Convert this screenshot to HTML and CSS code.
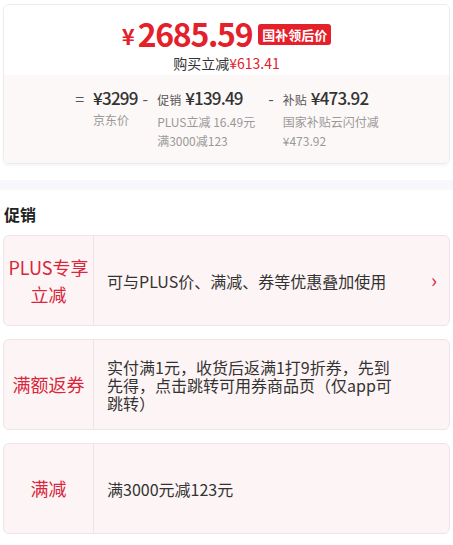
FILE: index.html
```html
<!DOCTYPE html>
<html lang="zh-CN">
<head>
    <meta charset="UTF-8">
    <meta name="viewport" content="width=device-width, initial-scale=1.0">
    <title>促销详情</title>
    <link rel="stylesheet" href="styles.css">
</head>
<body>

    <div class="price-card">
        <div class="price-top">
            <div class="price-main">
                <span class="yen">¥</span><span class="amount">2685.59</span>
                <span class="badge">国补领后价</span>
            </div>
            <div class="price-save">购买立减<span class="red">¥613.41</span></div>
        </div>
        <div class="price-calc">
            <div class="calc-col">
                <span class="op">=</span>
                <div class="calc-body">
                    <div class="calc-head"><span class="num">¥3299</span></div>
                    <div class="calc-note">京东价</div>
                </div>
            </div>
            <div class="calc-col">
                <span class="op">-</span>
                <div class="calc-body">
                    <div class="calc-head"><span class="tag">促销</span><span class="num">¥139.49</span></div>
                    <div class="calc-note">PLUS立减 16.49元</div>
                    <div class="calc-note">满3000减123</div>
                </div>
            </div>
            <div class="calc-col wide">
                <span class="op">-</span>
                <div class="calc-body">
                    <div class="calc-head"><span class="tag">补贴</span><span class="num">¥473.92</span></div>
                    <div class="calc-note">国家补贴云闪付减</div>
                    <div class="calc-note">¥473.92</div>
                </div>
            </div>
        </div>
    </div>

    <div class="band"></div>

    <h3 class="section-title">促销</h3>

    <div class="promo-list">
        <div class="promo">
            <div class="promo-label">PLUS专享<br>立减</div>
            <div class="promo-text">可与PLUS价、满减、券等优惠叠加使用</div>
            <span class="promo-arrow">›</span>
        </div>
        <div class="promo">
            <div class="promo-label">满额返券</div>
            <div class="promo-text">实付满1元，收货后返满1打9折券，先到先得，点击跳转可用券商品页（仅app可跳转）</div>
        </div>
        <div class="promo">
            <div class="promo-label">满减</div>
            <div class="promo-text">满3000元减123元</div>
        </div>
    </div>

</body>
</html>
```

FILE: styles.css
```css
body {
    margin: 0;
    font-family: "Noto Sans CJK SC", "Noto Sans", sans-serif;
    color: #222;
    background-color: #fff;
}
.red {
    color: #e4202b;
}
.price-card {
    margin: 4px 3px 0;
    border: 1px solid #ececec;
    border-radius: 6px;
    overflow: hidden;
    box-shadow: 0 2px 3px rgba(0, 0, 0, 0.04);
}
.price-top {
    background-color: #fff;
    text-align: center;
    padding: 11px 0 3px;
}
.price-main {
    display: flex;
    justify-content: center;
    align-items: center;
    color: #e4202b;
    height: 34px;
    line-height: 28px;
}
.yen {
    font-size: 22px;
    font-weight: 700;
    margin-right: 3px;
    margin-top: 3px;
}
.amount {
    font-size: 32px;
    font-weight: 700;
    letter-spacing: -1.3px;
}
.badge {
    margin-left: 6px;
    background-color: #e4202b;
    color: #fff;
    font-size: 13px;
    font-weight: 700;
    padding: 0 4px;
    line-height: 21px;
    border-radius: 3px;
    margin-top: 2px;
}
.price-save {
    font-size: 14px;
    color: #333;
    line-height: 18px;
    margin-top: 4px;
}
.price-calc {
    background-color: #fdf8f8;
    display: flex;
    justify-content: center;
    padding: 11px 0 13px 6px;
}
.calc-col {
    display: flex;
    align-items: flex-start;
    margin-right: 5px;
}
.calc-col.wide {
    margin-left: 8px;
}
.op {
    font-size: 16px;
    color: #555;
    line-height: 24px;
    margin-right: 9px;
}
.calc-head {
    display: flex;
    align-items: baseline;
    line-height: 24px;
    white-space: nowrap;
}
.tag {
    font-size: 12px;
    color: #555;
    margin-right: 4px;
}
.num {
    font-size: 17px;
    font-weight: 500;
    color: #333;
    letter-spacing: -0.8px;
}
.calc-note {
    font-size: 12px;
    color: #999;
    line-height: 19px;
    white-space: nowrap;
}
.band {
    height: 10px;
    margin-top: 16px;
    background-color: #f7f7fc;
}
.section-title {
    margin: 0;
    padding: 14px 4px 10px;
    font-size: 16px;
    font-weight: 700;
    color: #222;
    line-height: 21px;
}
.promo-list {
    display: flex;
    flex-direction: column;
    gap: 13px;
    padding: 0 3px;
}
.promo {
    position: relative;
    display: flex;
    min-height: 89px;
    background-color: #fdf5f5;
    border: 1px solid #f1e2e5;
    border-radius: 6px;
}
.promo-label {
    width: 89px;
    flex-shrink: 0;
    border-right: 1px solid #efe3e5;
    display: flex;
    align-items: center;
    justify-content: center;
    text-align: center;
    color: #d8263c;
    font-size: 18px;
    line-height: 27px;
}
.promo-text {
    flex: 1;
    display: flex;
    align-items: center;
    padding: 0 52px 0 13px;
    font-size: 16px;
    line-height: 18px;
    color: #333;
}
.promo-arrow {
    position: absolute;
    right: 12px;
    top: 50%;
    transform: translateY(-54%);
    color: #d8263c;
    font-size: 20px;
    line-height: 20px;
}
```
